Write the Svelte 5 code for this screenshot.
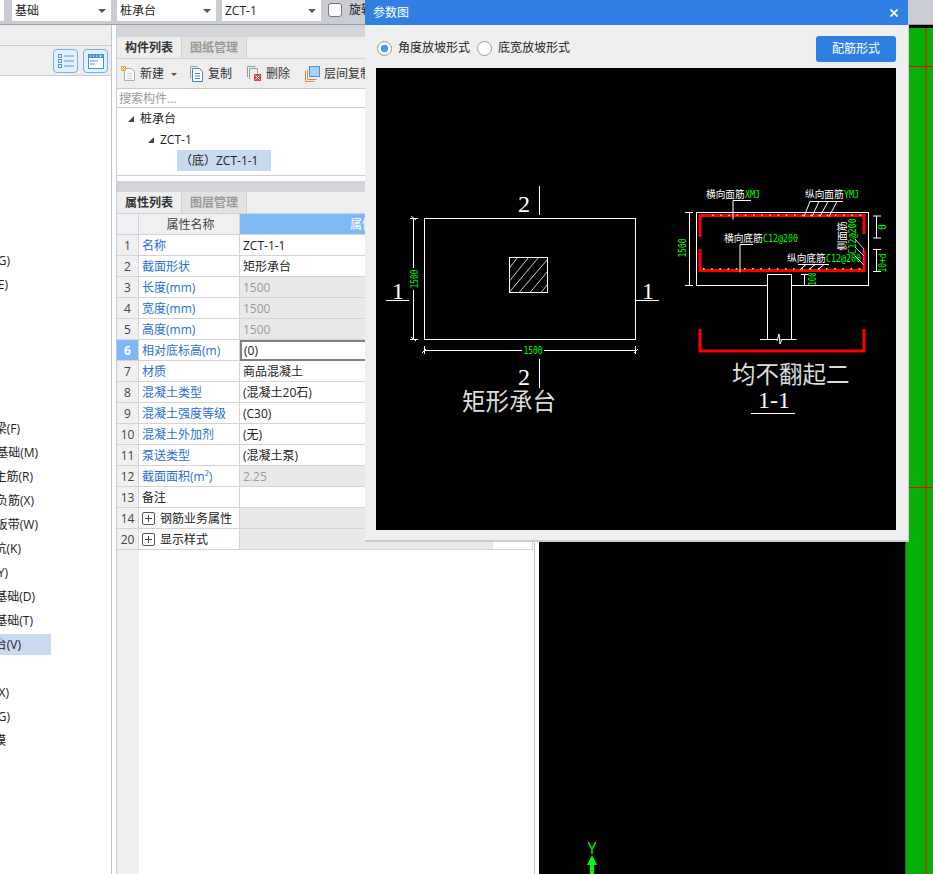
<script>
  const leftRows = [
    '', '', '', '', '', '', '', '地沟(G)', '砖胎膜(E)', '', '', '', '', '',
    '基础梁(F)', '筏板基础(M)', '筏板主筋(R)', '筏板负筋(X)', '基础板带(W)', '集水坑(K)',
    '柱墩(Y)', '独立基础(D)', '条形基础(T)', '桩承台(V)', '', '垫层(X)', '地沟(G)', '建模'
  ];
  // where each clipped label ends, the list is scrolled sideways in the app
  const rowEnds = { 7: 10, 8: 8, 14: 20, 15: 38, 16: 33, 17: 34, 18: 38, 19: 21, 20: 8, 21: 35, 22: 33, 23: 21, 25: 9, 26: 10, 27: 6 };

  const props = [
    { n: 1, name: '名称', value: 'ZCT-1-1', link: true },
    { n: 2, name: '截面形状', value: '矩形承台', link: true },
    { n: 3, name: '长度(mm)', value: '1500', link: true, off: true },
    { n: 4, name: '宽度(mm)', value: '1500', link: true, off: true },
    { n: 5, name: '高度(mm)', value: '1500', link: true, off: true },
    { n: 6, name: '相对底标高(m)', value: '(0)', link: true, current: true },
    { n: 7, name: '材质', value: '商品混凝土', link: true },
    { n: 8, name: '混凝土类型', value: '(混凝土20石)', link: true },
    { n: 9, name: '混凝土强度等级', value: '(C30)', link: true },
    { n: 10, name: '混凝土外加剂', value: '(无)', link: true },
    { n: 11, name: '泵送类型', value: '(混凝土泵)', link: true },
    { n: 12, name: '截面面积(m²)', value: '2.25', link: true, off: true },
    { n: 13, name: '备注', value: '' },
    { n: 14, name: '钢筋业务属性', value: '', group: true },
    { n: 20, name: '显示样式', value: '', group: true }
  ];

  const topDots = Array.from({ length: 19 }, (_, i) => 712 + i * 8.2);
  const bottomDots = Array.from({ length: 20 }, (_, i) => 703 + i * 8.2);
</script>

<div class="page">
  <header class="topbar">
    <div class="select sliver"></div>
    <div class="select"><span>基础</span><i class="caret"></i></div>
    <div class="select"><span>桩承台</span><i class="caret"></i></div>
    <div class="select"><span>ZCT-1</span><i class="caret"></i></div>
    <span class="check"></span>
    <span class="check-label">旋转</span>
  </header>

  <div class="main">
    <aside class="left">
      <div class="left-head"></div>
      <div class="left-tools">
        <button class="view-btn" aria-label="列表">
          <svg width="18" height="16" viewBox="0 0 18 16" fill="none" stroke="#4a9af0">
            <rect x="1.5" y="1.5" width="3" height="3" /><rect x="1.5" y="6.5" width="3" height="3" /><rect x="1.5" y="11.5" width="3" height="3" />
            <path d="M7 3h10M7 8h10M7 13h10" />
          </svg>
        </button>
        <button class="view-btn" aria-label="窗口">
          <svg width="16" height="15" viewBox="0 0 16 15">
            <rect x="0.5" y="0.5" width="15" height="14" fill="#fff" stroke="#3f93ee" />
            <rect x="0" y="0" width="16" height="4" fill="#3f93ee" />
            <path d="M2 2h1M5 2h1M8 2h1" stroke="#fff" />
            <path d="M11 1.5h3l-1.5 2z" fill="#fff" />
            <path d="M2 7h8M2 10h5" stroke="#3f93ee" />
          </svg>
        </button>
      </div>
      <div class="left-list">
        {#each leftRows as label, i}
          <div class="left-row">
            <div class="left-label" class:selected={i === 23} style:width="{i === 23 ? 51 : rowEnds[i] || 0}px">
              <span class="left-text" class:inset={i === 23}>{label}</span>
            </div>
          </div>
        {/each}
      </div>
    </aside>

    <section class="panel">
      <div class="grip"></div>
      <div class="tabs">
        <span class="tab active">构件列表</span>
        <span class="tab">图纸管理</span>
      </div>
      <div class="tools">
        <span class="tool new">
          <svg width="15" height="16" viewBox="0 0 15 16" fill="none">
            <path d="M3.5 2.5h7l3 3v9h-10z" fill="#fafafa" stroke="#aaa" />
            <path d="M6 7.5h5M6 10h5M6 12.5h5" stroke="#ccc" />
            <rect x="0" y="0" width="5" height="5" fill="#f5a63c" />
            <path d="M1 1l3 3M4 1L1 4" stroke="#fde9b8" />
          </svg>
          新建
        </span>
        <i class="caret small"></i>
        <span class="tool copy">
          <svg width="14" height="16" viewBox="0 0 14 16" fill="none">
            <path d="M0.5 12V0.5h7" stroke="#9aa4b0" />
            <path d="M2.5 2.5h7l3 3v10h-10z" fill="#fff" stroke="#3f86d8" />
            <path d="M5 7.5h5M5 10h5M5 12.5h5" stroke="#3f86d8" />
          </svg>
          复制
        </span>
        <span class="tool del">
          <svg width="15" height="16" viewBox="0 0 15 16" fill="none">
            <path d="M0.5 11V0.5h8" stroke="#9a9a9a" />
            <path d="M2.5 13V2.5h8v5" stroke="#9a9a9a" />
            <rect x="7" y="8" width="7" height="7" fill="#d8434a" />
            <path d="M8.5 9.5l4 4M12.5 9.5l-4 4" stroke="#fff" />
          </svg>
          删除
        </span>
        <span class="tool floors">
          <svg width="15" height="16" viewBox="0 0 15 16" fill="none">
            <path d="M0.5 15V5M0.5 15.5h9" stroke="#e8833a" />
            <path d="M2.5 13V4M2.5 13.5h9" stroke="#e8833a" />
            <rect x="4.5" y="0.5" width="10" height="10" fill="#a9d0fb" stroke="#4a90e2" />
          </svg>
          层间复制
        </span>
      </div>
      <div class="search">搜索构件...</div>
      <div class="tree">
        <div class="node"><i class="arrow"></i>桩承台</div>
        <div class="node lvl2"><i class="arrow"></i>ZCT-1</div>
        <div class="node lvl3"><span class="picked">（底）ZCT-1-1</span></div>
      </div>

      <div class="spacer"></div>
      <div class="grip small"></div>
      <div class="tabs">
        <span class="tab active">属性列表</span>
        <span class="tab">图层管理</span>
      </div>

      <div class="grid">
        <div class="row head last">
          <div class="idx"></div>
          <div class="name">属性名称</div>
          <div class="value">属性值</div>
          <div class="tail"></div>
        </div>
        {#each props as p}
          <div class="row" class:last={p.n === 20}>
            <div class="idx" class:on={p.current}>{p.n}</div>
            <div class="name" class:link={p.link}>
              {#if p.group}<span class="plus"></span>{/if}{p.name}
            </div>
            <div class="value" class:off={p.off || p.group} class:current={p.current}>{p.value}</div>
            {#if p.n === 20}<div class="tail"></div>{/if}
          </div>
        {/each}
        <div class="gutter"></div>
      </div>
    </section>

    <section class="canvas">
      <div class="black"></div>
      <div class="band">
        <svg width="28" height="846" viewBox="0 0 28 846">
          <path d="M21 0v846" stroke="#f00" />
          <path d="M0 38.5h28M0 459.5h28" stroke="#f00" />
        </svg>
      </div>
      <svg class="axis" width="14" height="32" viewBox="0 0 14 32">
        <path d="M3 0l4 7 4-7M7 7v5" stroke="#00ff00" stroke-width="1.4" fill="none" />
        <path d="M7 13l5 10H9v9H5v-9H2z" fill="#00ff00" />
      </svg>
    </section>
  </div>

  <div class="dialog">
    <div class="dialog-title">
      <span>参数图</span>
      <svg width="8" height="8" viewBox="0 0 8 8"><path d="M0.5 0.5l7 7M7.500 0.5l-7 7" stroke="#fff" stroke-width="1.7" /></svg>
    </div>
    <div class="dialog-opts">
      <span class="radio on"></span><span class="radio-label">角度放坡形式</span>
      <span class="radio"></span><span class="radio-label">底宽放坡形式</span>
      <button class="primary">配筋形式</button>
    </div>
    <div class="drawing">
      <svg width="520" height="462" viewBox="376 68 520 462" fill="none" stroke="#fff">
        <!-- plan view -->
        <rect x="424.5" y="218.5" width="211" height="121" />
        <rect x="509.5" y="257.5" width="38" height="35" />
        <path stroke-width="0.8" d="M509.500 268l8-10.500M509.500 281l19-23.500M509.500 292l29-34.500M519 292.500l28.500-33M530 292.500l17.500-21M541 292.500l6.500-8" />
        <path d="M539.500 186v29M539.500 359v29M386 300.500h23M636 300.500h23" />
        <path d="M413.500 218v121M410 218.500h8M410 339.500h8M411 216l5 4M411 337l5 4" />
        <path d="M424 350.500h212M424.500 346v8M635.500 346v8M422 353l4-4M634 353l4-4" />
        <rect x="409" y="268" width="9" height="22" fill="#000" stroke="none" />
        <rect x="522" y="346" width="22" height="9" fill="#000" stroke="none" />
        <g class="cad" stroke="none" fill="#fff">
          <text x="524" y="212" text-anchor="middle">2</text>
          <text x="524" y="385" text-anchor="middle">2</text>
          <text x="398" y="299" text-anchor="middle">1</text>
          <text x="648" y="299" text-anchor="middle">1</text>
          <text class="cn" x="462" y="409.500">矩形承台</text>
          <text class="cn" x="732" y="383">均不翻起二</text>
          <text x="774" y="408" text-anchor="middle">1-1</text>
        </g>
        <path d="M751 413.500h44" />
        <g class="dim" stroke="none" fill="#00ff00">
          <text transform="rotate(-90 418 279)" x="418" y="279" text-anchor="middle" textLength="19" lengthAdjust="spacingAndGlyphs">1500</text>
          <text x="533" y="354" text-anchor="middle" textLength="19" lengthAdjust="spacingAndGlyphs">1500</text>
          <text transform="rotate(-90 686 248)" x="686" y="248" text-anchor="middle" textLength="19" lengthAdjust="spacingAndGlyphs">1500</text>
          <text transform="rotate(-90 815.500 279)" x="815.500" y="279" text-anchor="middle" textLength="13" lengthAdjust="spacingAndGlyphs">100</text>
          <text transform="rotate(-90 886 227)" x="886" y="227" text-anchor="middle">0</text>
          <text transform="rotate(-90 886 263)" x="886" y="263" text-anchor="middle" textLength="19" lengthAdjust="spacingAndGlyphs">10+d</text>
          <text transform="rotate(-90 855.500 236)" x="855.500" y="236" text-anchor="middle" textLength="36" lengthAdjust="spacingAndGlyphs">C12@200</text>
          <text x="745" y="198" textLength="15" lengthAdjust="spacingAndGlyphs">XMJ</text>
          <text x="844" y="198" textLength="15" lengthAdjust="spacingAndGlyphs">YMJ</text>
          <text x="763" y="242" textLength="35" lengthAdjust="spacingAndGlyphs">C12@200</text>
          <text x="826" y="262" textLength="35" lengthAdjust="spacingAndGlyphs">C12@200</text>
        </g>

        <!-- section 1-1 -->
        <rect x="696.500" y="212.500" width="172" height="73" />
        <path d="M689.500 212v74M685 212.500h8M685 285.500h8" />
        <path d="M876.500 216v22M873 216h8M873 238h8M876.500 249v23M873 249.500h8M873 271.500h8" />
        <rect x="767.500" y="274.500" width="24" height="65" fill="#000" />
        <path d="M760 339.500h17M783 339.500h13.500M777 341l2-7 1 10 2-5" fill="#000" />
        <path d="M804.500 274v12M801 274.500h7" />
        <path d="M700 237V215.500h164V234M700 249v21.500h164V250" stroke="#f00" stroke-width="3" />
        <path d="M700 329v22h164v-22" stroke="#f00" stroke-width="3" />
        {#each topDots as x}<rect {x} y="214.500" width="1.500" height="1.500" fill="#ff0" stroke="none" />{/each}
        {#each bottomDots as x}<rect {x} y="268" width="1.500" height="1.500" fill="#ff0" stroke="none" />{/each}

        <path d="M751 200.500h-18v19M810 201.500h33M810 201.500l-6 15M819 201.500l-7 15M828 201.500l-8 15M837 201.500l-8 15" />
        <path d="M753 244.500h-13v28M798 264.500h31M806 264.500l-6 5M815 264.500l-6 5M824 264.500l-6 5" />
        <path d="M855 239l9 10M855 247l9 9M855 256l9 9" stroke-width="0.8" />
        <path d="M863.500 249v4M863.500 257v4" stroke="#ff00ff" />
        <g class="label" stroke="none" fill="#fff">
          <text x="706" y="198">横向面筋</text>
          <text x="805" y="198">纵向面筋</text>
          <text x="724" y="242">横向底筋</text>
          <text x="787" y="262">纵向底筋</text>
          <text transform="rotate(-90 846 236)" x="846" y="236" text-anchor="middle">侧面筋</text>
        </g>
      </svg>
    </div>
  </div>
</div>

<style>
  :global(body) {
    margin: 0;
    overflow: hidden;
  }

  .page {
    position: relative;
    width: 933px;
    height: 874px;
    overflow: hidden;
    background: #fff;
    color: #222;
    font: 12px/20px "Open Sans", "Noto Sans CJK SC", sans-serif;
  }

  .topbar {
    display: flex;
    align-items: flex-start;
    gap: 6px;
    height: 24px;
    background: #c9ccd2;
    border-bottom: 1px solid #9a9da3;
    box-sizing: content-box;
  }
  .select {
    display: flex;
    align-items: center;
    justify-content: space-between;
    box-sizing: border-box;
    width: 99px;
    height: 21px;
    padding: 0 5px 0 3px;
    background: #fff;
    font-size: 12px;
  }
  .select.sliver {
    width: 4px;
    margin-right: 2px;
    padding: 0;
  }
  .caret {
    width: 0;
    height: 0;
    border: 4px solid transparent;
    border-top-color: #555;
    border-bottom-width: 0;
  }
  .caret.small {
    margin: 2px 13px 0 7px;
    border-width: 3px;
    border-bottom-width: 0;
  }
  .check {
    box-sizing: border-box;
    width: 14px;
    height: 14px;
    margin: 3px 1px 0 1px;
    background: #fff;
    border: 1px solid #777;
    border-radius: 3px;
  }

  .main {
    display: flex;
    height: 849px;
  }

  .left {
    flex: none;
    display: flex;
    flex-direction: column;
    box-sizing: border-box;
    width: 112px;
    margin-right: 4px;
    border-right: 1px solid #c4c4c4;
  }
  .left-head {
    height: 20px;
    background: #eee;
    border-bottom: 1px solid #ccc;
  }
  .left-tools {
    display: flex;
    justify-content: flex-end;
    gap: 5px;
    box-sizing: border-box;
    height: 30px;
    padding: 3px 3px 0 0;
    background: #eee;
    border-bottom: 1px solid #ccc;
  }
  .view-btn {
    display: flex;
    align-items: center;
    justify-content: center;
    width: 25px;
    height: 24px;
    padding: 0;
    background: #e6f1fc;
    border: 1px solid #6db1f6;
    border-radius: 4px;
  }
  .left-list {
    padding-top: 4px;
  }
  .left-row {
    display: flex;
    align-items: center;
    height: 24px;
  }
  .left-label {
    display: flex;
    justify-content: flex-end;
    height: 21px;
    line-height: 21px;
    overflow: hidden;
    white-space: nowrap;
  }
  .left-label.selected {
    background: #c8d9f0;
  }
  .left-text {
    flex: none;
  }
  .left-text.inset {
    margin-right: 30px;
  }

  .panel {
    flex: none;
    display: flex;
    flex-direction: column;
    box-sizing: border-box;
    width: 419px;
    border-left: 1px solid #c8ccd2;
    border-right: 1px solid #c4c4c4;
  }
  .grip {
    height: 12px;
    background: #d3d5da;
  }
  .grip.small {
    height: 11px;
  }
  .spacer {
    height: 6px;
    border-top: 1px solid #d0d0d0;
    box-sizing: border-box;
  }
  .tabs {
    display: flex;
    height: 22px;
    box-sizing: border-box;
    background: #eee;
    border-bottom: 1px solid #cfd2d6;
  }
  .tab {
    box-sizing: border-box;
    width: 65px;
    text-align: center;
    line-height: 21px;
    font-weight: 700;
    color: #9a9a9a;
    background: #e2e2e2;
    border-right: 1px solid #cfcfcf;
  }
  .tab.active {
    color: #333;
    background: #eee;
  }
  .tools {
    display: flex;
    align-items: center;
    box-sizing: border-box;
    height: 30px;
    padding-left: 4px;
    background: #eee;
    border-bottom: 1px solid #c8ccd2;
    white-space: nowrap;
  }
  .tool {
    display: flex;
    align-items: center;
    gap: 4px;
    color: #333;
  }
  .tool.del {
    margin-left: 15px;
  }
  .tool.floors {
    margin-left: 15px;
  }
  .search {
    box-sizing: border-box;
    height: 19px;
    padding-left: 2px;
    line-height: 20px;
    color: #999;
    border-bottom: 1px solid #c8ccd2;
  }
  .tree {
    box-sizing: border-box;
    height: 67px;
  }
  .node {
    display: flex;
    align-items: center;
    height: 21px;
    padding-left: 11px;
  }
  .node.lvl2 {
    padding-left: 31px;
  }
  .node.lvl3 {
    padding-left: 60px;
  }
  .arrow {
    width: 0;
    height: 0;
    margin-right: 6px;
    border-left: 6px solid transparent;
    border-bottom: 6px solid #444;
  }
  .picked {
    display: block;
    width: 94px;
    height: 21px;
    box-sizing: border-box;
    line-height: 21px;
    padding-left: 3px;
    background: #c8d9f0;
    white-space: nowrap;
  }

  .grid {
    flex: 1;
    display: flex;
    flex-direction: column;
    min-height: 0;
  }
  .row {
    display: flex;
    flex: none;
    height: 21px;
    line-height: 21px;
  }
  .row > div {
    box-sizing: border-box;
    border-bottom: 1px solid #d4d4d4;
  }
  .idx {
    flex: none;
    width: 22px;
    text-align: center;
    background: #f0f0f0;
    border-right: 1px solid #d4d4d4;
    color: #444;
  }
  .idx.on {
    color: #fff;
    font-weight: 700;
    background: #7fb8f7;
  }
  .name {
    flex: none;
    display: flex;
    align-items: center;
    width: 101px;
    padding-left: 3px;
    border-right: 1px solid #d4d4d4;
    white-space: nowrap;
  }
  .name.link {
    color: #2a6fd6;
  }
  .value {
    flex: 1;
    padding-left: 3px;
  }
  .value.off {
    color: #999;
    background: #e9e9e9;
  }
  .value.current {
    border: 2px solid #808080;
    border-right: 0;
    padding-left: 2px;
    line-height: 17px;
  }
  .row.head .idx {
    background: #eef1f5;
  }
  .row.head .name {
    justify-content: center;
    background: #f0f0f0;
    color: #444;
  }
  .row.head .value {
    text-align: center;
    color: #fff;
    background: #7fb8f7;
  }
  .row.last .value {
    flex: none;
    width: 253px;
  }
  .row.last .tail {
    width: 40px;
    border-right: 1px solid #d4d4d4;
  }
  .plus {
    box-sizing: border-box;
    width: 13px;
    height: 13px;
    margin-right: 5px;
    border: 1px solid #555;
    border-radius: 2px;
    background: linear-gradient(#444, #444) center / 7px 1px no-repeat, linear-gradient(#444, #444) center / 1px 7px no-repeat;
  }
  .gutter {
    flex: 1;
    width: 22px;
    background: #efefef;
  }

  .canvas {
    position: relative;
    flex: 1;
    display: flex;
    margin-left: 4px;
  }
  .black {
    flex: 1;
    background: #000;
  }
  .band {
    flex: none;
    box-sizing: border-box;
    width: 28px;
    padding-top: 3px;
    background: #000;
  }
  .band svg {
    display: block;
    background: #07b007;
    box-shadow: inset 1px 0 0 #0a6e0a;
  }
  .axis {
    position: absolute;
    left: 46px;
    bottom: 0;
  }

  .dialog {
    position: absolute;
    left: 365px;
    top: 0;
    box-sizing: border-box;
    width: 544px;
    height: 542px;
    background: #efefef;
    border-right: 1px solid #c8ccd2;
    border-bottom: 2px solid #c8ccd2;
  }
  .dialog-title {
    display: flex;
    align-items: center;
    justify-content: space-between;
    box-sizing: border-box;
    height: 25px;
    padding: 0 10px 0 8px;
    color: #fff;
    background: #2f80e2;
  }
  .dialog-opts {
    display: flex;
    align-items: center;
    box-sizing: border-box;
    height: 43px;
    padding: 3px 12px 0 12px;
  }
  .radio {
    box-sizing: border-box;
    width: 15px;
    height: 15px;
    background: #fff;
    border: 1px solid #999;
    border-radius: 50%;
  }
  .radio.on {
    background: radial-gradient(circle, #4a96f0 0 3.5px, #fff 4px);
  }
  .radio-label {
    margin: 0 7px 0 6px;
  }
  .primary {
    width: 80px;
    height: 26px;
    margin: 2px 0 0 auto;
    padding: 0;
    color: #fff;
    font: inherit;
    background: #2f80e2;
    border: 0;
    border-radius: 3px;
  }
  .drawing {
    width: 520px;
    height: 462px;
    margin-left: 11px;
    background: #000;
  }
  .drawing svg {
    display: block;
  }
  .cad text {
    font: 24px "Liberation Serif", serif;
  }
  .cad text.cn {
    font: 23.5px "Noto Sans CJK SC", serif;
    fill: #dcdcdc;
  }
  .dim text {
    font: 10px "DejaVu Sans Mono", monospace;
  }
  .label text {
    font: 9.7px "Noto Sans CJK SC", sans-serif;
  }
</style>
